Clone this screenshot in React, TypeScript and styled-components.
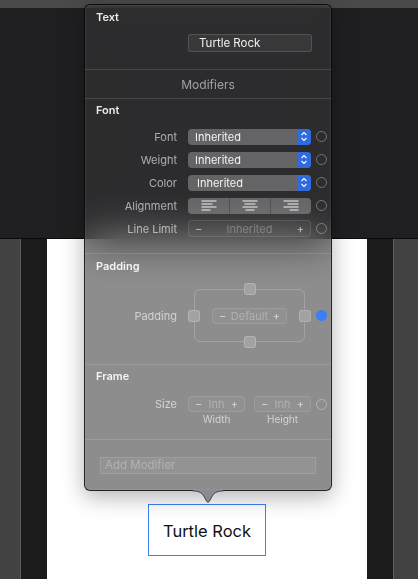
import React, { FC } from "react";
import styled, { createGlobalStyle } from "styled-components";

// Styles
const GlobalStyle = createGlobalStyle`
  html, body { margin: 0; padding: 0; background: #1f1f21; }
  body { font-family: Inter, "Noto Sans", "Liberation Sans", sans-serif; -webkit-font-smoothing: antialiased; }
  * { box-sizing: border-box; }
`;

const Screen = styled.div`
  position: relative;
  width: 418px;
  height: 579px;
  display: flex;
  flex-direction: column;
  overflow: hidden;
`;

const TopStrip = styled.div`
  height: 8px;
  background: #4a4a4a;
`;

const DarkArea = styled.div`
  height: 231px;
  background: #1f1f21;
  border-bottom: 1px solid #0a0a0a;
`;

const DeviceRow = styled.div`
  flex: 1;
  display: flex;
`;

const Gutter = styled.div<{ $w: number; $side: "left" | "right" }>`
  width: ${(p) => p.$w}px;
  flex: ${(p) => (p.$side === "right" ? 1 : "none")};
  background: #424242;
  ${(p) => (p.$side === "left" ? "border-right" : "border-left")}: 1px solid #5c5c5c;
`;

const Bezel = styled.div`
  width: 26px;
  background: #1b1b1b;
`;

const Canvas = styled.div`
  width: 320px;
  background: #ffffff;
  display: flex;
  flex-direction: column;
  align-items: center;
  padding-top: 265px;
`;

const Selection = styled.div`
  width: 118px;
  height: 52px;
  border: 1.5px solid #3a82f7;
  display: flex;
  align-items: center;
  justify-content: center;
  font-size: 16.5px;
  color: #111;
  padding-top: 1px;
`;

const Overlay = styled.div`
  position: absolute;
  left: 84px;
  top: 4px;
  width: 248px;
  display: flex;
  flex-direction: column;
  align-items: center;
`;

const Panel = styled.div`
  width: 248px;
  height: 487px;
  border: 1px solid rgba(0, 0, 0, 0.75);
  border-radius: 6px;
  background: rgba(54, 54, 56, 0.57);
  backdrop-filter: blur(22px);
  box-shadow: 0 6px 22px rgba(0, 0, 0, 0.3), inset 0 0 0 1px rgba(255, 255, 255, 0.06);
  display: flex;
  flex-direction: column;
  overflow: hidden;
`;

const Arrow = styled.svg`
  display: block;
  margin-top: -1px;
  position: relative;
  z-index: 1;
`;

const Section = styled.section<{ $h: number; $pt: number; $last?: boolean }>`
  height: ${(p) => p.$h}px;
  padding-top: ${(p) => p.$pt}px;
  border-bottom: ${(p) => (p.$last ? "none" : "1px solid rgba(255, 255, 255, 0.13)")};
  display: flex;
  flex-direction: column;
`;

const Title = styled.div`
  height: 14px;
  line-height: 14px;
  padding-left: 11px;
  font-size: 11px;
  font-weight: 600;
  color: rgba(255, 255, 255, 0.9);
`;

const Centered = styled.div`
  height: 28px;
  display: flex;
  align-items: center;
  justify-content: center;
  font-size: 12px;
  color: rgba(255, 255, 255, 0.55);
`;

const Row = styled.div<{ $h?: number; $mt?: number }>`
  height: ${(p) => p.$h ?? 23}px;
  margin-top: ${(p) => p.$mt ?? 0}px;
  display: flex;
  align-items: center;
`;

const Label = styled.div`
  width: 92px;
  margin-right: 11px;
  text-align: right;
  font-size: 11px;
  color: rgba(255, 255, 255, 0.6);
`;

const TextField = styled.div`
  width: 124px;
  height: 18px;
  margin-left: 103px;
  margin-top: 10px;
  border: 1px solid rgba(255, 255, 255, 0.14);
  border-radius: 3px;
  background: rgba(255, 255, 255, 0.06);
  padding-left: 10px;
  font-size: 11.5px;
  line-height: 16px;
  color: rgba(255, 255, 255, 0.92);
`;

const Select = styled.div`
  width: 123px;
  height: 16px;
  border-radius: 4px;
  background: rgba(255, 255, 255, 0.27);
  display: flex;
  overflow: hidden;
`;

const SelectText = styled.div<{ $pl?: number }>`
  flex: 1;
  padding-left: ${(p) => p.$pl ?? 7}px;
  font-size: 11px;
  line-height: 16px;
  color: rgba(255, 255, 255, 0.92);
`;

const Stepper = styled.div`
  width: 14px;
  background: #2e6be0;
  display: flex;
  align-items: center;
  justify-content: center;
`;

const Dot = styled.div<{ $on?: boolean }>`
  width: 11px;
  height: 11px;
  margin-left: 5px;
  border-radius: 50%;
  border: ${(p) => (p.$on ? "none" : "1px solid rgba(255, 255, 255, 0.33)")};
  background: ${(p) => (p.$on ? "#3a7ff6" : "transparent")};
`;

const Segmented = styled.div`
  width: 123px;
  height: 16px;
  border-radius: 4px;
  background: rgba(255, 255, 255, 0.27);
  display: grid;
  grid-template-columns: repeat(3, 1fr);
  overflow: hidden;
`;

const Segment = styled.div`
  display: flex;
  align-items: center;
  justify-content: center;
  & + & {
    border-left: 1px solid rgba(0, 0, 0, 0.22);
  }
`;

const NumberField = styled.div<{ $w: number; $h?: number }>`
  width: ${(p) => p.$w}px;
  height: ${(p) => p.$h ?? 16}px;
  border-radius: 4px;
  border: 1px solid rgba(255, 255, 255, 0.1);
  background: rgba(255, 255, 255, 0.04);
  display: flex;
  align-items: center;
  justify-content: space-between;
  padding: 0 6px;
  font-size: 11px;
`;

const StepSign = styled.span`
  color: rgba(255, 255, 255, 0.62);
  font-size: 11px;
`;

const Muted = styled.span`
  color: rgba(255, 255, 255, 0.28);
`;

const PaddingBox = styled.div`
  position: relative;
  width: 123px;
  height: 65px;
  display: grid;
  grid-template-columns: 12px 1fr 12px;
  grid-template-rows: 12px 1fr 12px;
  &::before {
    content: "";
    position: absolute;
    inset: 6px;
    border: 1px solid rgba(255, 255, 255, 0.2);
    border-radius: 6px;
  }
`;

const Handle = styled.div<{ $col: number; $row: number }>`
  grid-column: ${(p) => p.$col};
  grid-row: ${(p) => p.$row};
  justify-self: center;
  align-self: center;
  width: 12px;
  height: 12px;
  border-radius: 3px;
  background: #a2a2a2;
  border: 1px solid rgba(255, 255, 255, 0.18);
  position: relative;
  z-index: 1;
`;

const PaddingCenter = styled.div`
  grid-column: 2;
  grid-row: 2;
  justify-self: center;
  align-self: center;
  position: relative;
  z-index: 1;
`;

const SizePair = styled.div`
  display: grid;
  grid-template-columns: 57px 57px;
  column-gap: 9px;
`;

const Caption = styled.div`
  text-align: center;
  font-size: 10px;
  line-height: 14px;
  color: rgba(255, 255, 255, 0.6);
`;

const AddField = styled.div`
  margin: 17px 15px 0;
  height: 17px;
  border: 1px solid rgba(255, 255, 255, 0.1);
  background: rgba(255, 255, 255, 0.05);
  padding-left: 4px;
  font-size: 11.5px;
  line-height: 15px;
  color: rgba(255, 255, 255, 0.28);
`;

// Icons
const Chevrons: FC = () => (
  <svg width="8" height="11" viewBox="0 0 8 11">
    <path d="M1.5 4 L4 1.5 L6.5 4 M1.5 7 L4 9.5 L6.5 7" stroke="#fff" strokeWidth="1.1" fill="none" />
  </svg>
);

const AlignIcon: FC<{ align: "left" | "center" | "right" }> = ({ align }) => {
  const widths = [15, 11, 15, 9];
  return (
    <svg width="16" height="11" viewBox="0 0 16 11">
      {widths.map((w, i) => {
        const x = align === "left" ? 0.5 : align === "right" ? 15.5 - w : (16 - w) / 2;
        return <line key={i} x1={x} x2={x + w} y1={1 + i * 3} y2={1 + i * 3} stroke="#f2f2f2" strokeWidth="1" />;
      })}
    </svg>
  );
};

const SelectRow: FC<{ label: string; pl?: number }> = ({ label, pl }) => (
  <Row>
    <Label>{label}</Label>
    <Select>
      <SelectText $pl={pl}>Inherited</SelectText>
      <Stepper>
        <Chevrons />
      </Stepper>
    </Select>
    <Dot />
  </Row>
);

const SIDES = "M0 1 C7 1 9.5 3.5 11.5 7.5 L13.8 11.6 Q15 13.2 16.2 11.6 L18.5 7.5 C20.5 3.5 23 1 30 1";

const App: FC = () => (
  <Screen>
    <GlobalStyle />
    <TopStrip />
    <DarkArea />
    <DeviceRow>
      <Gutter $w={21} $side="left" />
      <Bezel />
      <Canvas>
        <Selection>Turtle Rock</Selection>
      </Canvas>
      <Bezel />
      <Gutter $w={25} $side="right" />
    </DeviceRow>

    <Overlay>
      <Panel>
        <Section $h={65} $pt={5}>
          <Title>Text</Title>
          <TextField>Turtle Rock</TextField>
        </Section>

        <Section $h={29} $pt={0}>
          <Centered>Modifiers</Centered>
        </Section>

        <Section $h={155} $pt={4}>
          <Title>Font</Title>
          <Row $mt={8}>
            <Label>Font</Label>
            <Select>
              <SelectText>Inherited</SelectText>
              <Stepper>
                <Chevrons />
              </Stepper>
            </Select>
            <Dot />
          </Row>
          <SelectRow label="Weight" />
          <SelectRow label="Color" pl={9} />
          <Row>
            <Label>Alignment</Label>
            <Segmented>
              <Segment>
                <AlignIcon align="left" />
              </Segment>
              <Segment>
                <AlignIcon align="center" />
              </Segment>
              <Segment>
                <AlignIcon align="right" />
              </Segment>
            </Segmented>
            <Dot />
          </Row>
          <Row>
            <Label>Line Limit</Label>
            <NumberField $w={123} $h={17}>
              <StepSign>−</StepSign>
              <Muted>Inherited</Muted>
              <StepSign>+</StepSign>
            </NumberField>
            <Dot />
          </Row>
        </Section>

        <Section $h={111} $pt={5}>
          <Title>Padding</Title>
          <Row $h={65} $mt={10}>
            <Label>Padding</Label>
            <PaddingBox>
              <Handle $col={2} $row={1} />
              <Handle $col={1} $row={2} />
              <PaddingCenter>
                <NumberField $w={75}>
                  <StepSign>−</StepSign>
                  <Muted>Default</Muted>
                  <StepSign>+</StepSign>
                </NumberField>
              </PaddingCenter>
              <Handle $col={3} $row={2} />
              <Handle $col={2} $row={3} />
            </PaddingBox>
            <Dot $on />
          </Row>
        </Section>

        <Section $h={75} $pt={4}>
          <Title>Frame</Title>
          <Row $h={16} $mt={13}>
            <Label>Size</Label>
            <SizePair>
              <NumberField $w={57}>
                <StepSign>−</StepSign>
                <Muted>Inh</Muted>
                <StepSign>+</StepSign>
              </NumberField>
              <NumberField $w={57}>
                <StepSign>−</StepSign>
                <Muted>Inh</Muted>
                <StepSign>+</StepSign>
              </NumberField>
            </SizePair>
            <Dot />
          </Row>
          <Row $h={14}>
            <Label />
            <SizePair>
              <Caption>Width</Caption>
              <Caption>Height</Caption>
            </SizePair>
          </Row>
        </Section>

        <Section $h={48} $pt={0} $last>
          <AddField>Add Modifier</AddField>
        </Section>
      </Panel>
      <Arrow width="30" height="14" viewBox="0 0 30 14">
        <path d={`${SIDES} L30 0 L0 0 Z`} fill="#898b92" />
        <path d={SIDES} stroke="rgba(0,0,0,0.6)" strokeWidth="1" fill="none" />
      </Arrow>
    </Overlay>
  </Screen>
);

export default App;
